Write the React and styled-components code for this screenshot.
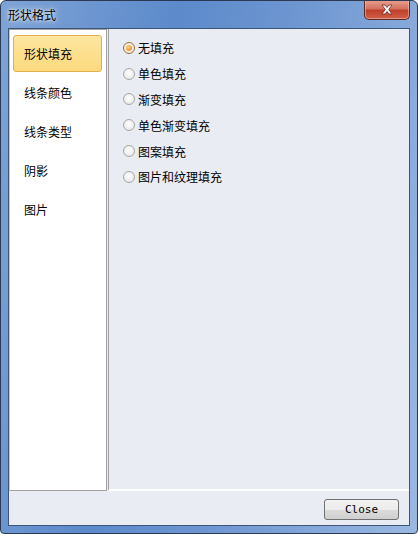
import React, { useState } from 'react'
import styled, { createGlobalStyle } from 'styled-components'

const GlobalStyle = createGlobalStyle`
  html, body {
    margin: 0;
    padding: 0;
    background: #ffffff;
  }
  body {
    font-family: "Noto Sans CJK SC", "Noto Sans", sans-serif;
  }
`

const Window = styled.div`
  width: 418px;
  height: 534px;
  box-sizing: border-box;
  border: 1px solid #2b3a52;
  border-radius: 6px 6px 4px 4px;
  background: linear-gradient(100deg, #7fa3d6 0%, #5c8acb 35%, #6f97d1 60%, #9ab8e2 100%);
  display: flex;
  flex-direction: column;
  overflow: hidden;
`

const TitleBar = styled.div`
  height: 27px;
  display: flex;
  align-items: flex-start;
  justify-content: space-between;
  padding-left: 7px;
`

const Title = styled.div`
  font-size: 12px;
  line-height: 28px;
  color: #000;
  text-shadow: 0 0 6px rgba(255, 255, 255, 0.9), 0 0 3px rgba(255, 255, 255, 0.9);
`

const CloseButton = styled.button`
  width: 46px;
  height: 20px;
  margin-right: 7px;
  margin-top: -1px;
  border: 1px solid #5b2a24;
  border-top: none;
  border-radius: 0 0 5px 5px;
  background: linear-gradient(#e8a293 0%, #d4725f 45%, #c0402b 55%, #d0604a 100%);
  box-shadow: inset 0 0 0 1px rgba(255, 200, 190, 0.5);
  display: flex;
  align-items: center;
  justify-content: center;
  padding: 0;
`

const Client = styled.div`
  flex: 1;
  margin: 0 7px 7px 7px;
  border: 1px solid #3d5678;
  background: #e9ecf2;
  display: flex;
  flex-direction: column;
`

const Body = styled.div`
  flex: 1;
  display: flex;
`

const Sidebar = styled.div`
  width: 98px;
  flex-shrink: 0;
  box-sizing: border-box;
  background: #ffffff;
  border: 1px solid #a0a0a0;
  border-left-color: #c8c8c8;
  box-shadow: inset 1px 1px 0 #ffffff;
  padding: 5px 4px 0 3px;
  display: flex;
  flex-direction: column;
`

const NavItem = styled.div`
  height: 37px;
  margin-bottom: 2px;
  box-sizing: border-box;
  border-radius: 3px;
  border: 1px solid ${(p) => (p.active ? '#e0b04e' : 'transparent')};
  background: ${(p) => (p.active ? 'linear-gradient(#fde6a0, #fcd97d)' : 'transparent')};
  padding-left: 10px;
  display: flex;
  align-items: center;
  font-size: 12px;
  color: #000;
`

const Content = styled.div`
  flex: 1;
  margin-left: 1px;
  border-left: 1px solid #a0a0a0;
  border-bottom: 2px solid #ffffff;
  padding: 6px 0 0 14px;
  display: flex;
  flex-direction: column;
`

const RadioRow = styled.label`
  height: 25.8px;
  display: flex;
  align-items: center;
  font-size: 12px;
  color: #000;
`

const RadioCircle = styled.span`
  width: 12px;
  height: 12px;
  box-sizing: border-box;
  border-radius: 50%;
  border: 1px solid ${(p) => (p.checked ? '#a26b35' : '#a8a8a8')};
  background: radial-gradient(circle at 50% 40%, #ffffff, #e2e2e2);
  margin-right: 3px;
  display: flex;
  align-items: center;
  justify-content: center;
  &::after {
    content: '';
    width: 6px;
    height: 6px;
    border-radius: 50%;
    background: ${(p) => (p.checked ? 'radial-gradient(circle at 40% 35%, #ffd27a, #e97a10)' : 'transparent')};
  }
`

const Footer = styled.div`
  height: 34px;
  display: flex;
  align-items: center;
  justify-content: flex-end;
  padding-right: 10px;
`

const Button = styled.button`
  width: 75px;
  height: 21px;
  border: 1px solid #707070;
  border-radius: 3px;
  background: linear-gradient(#f2f2f2 0%, #ebebeb 50%, #dddddd 51%, #cfcfcf 100%);
  font-family: "DejaVu Sans Mono", "Liberation Mono", monospace;
  font-size: 11px;
  color: #000;
  padding: 0;
  margin-top: 2px;
`

const navItems = ['形状填充', '线条颜色', '线条类型', '阴影', '图片']
const fillOptions = ['无填充', '单色填充', '渐变填充', '单色渐变填充', '图案填充', '图片和纹理填充']

const App = () => {
  const [selectedNav, setSelectedNav] = useState(0)
  const [selectedFill, setSelectedFill] = useState(0)
  return (
    <>
      <GlobalStyle />
      <Window>
        <TitleBar>
          <Title>形状格式</Title>
          <CloseButton>
            <svg width="14" height="11" viewBox="0 0 14 11">
              <path
                d="M2 1 L5 1 L7 3.5 L9 1 L12 1 L8.7 5.5 L12 10 L9 10 L7 7.5 L5 10 L2 10 L5.3 5.5 Z"
                fill="#ffffff"
                stroke="#6b2a22"
                strokeWidth="0.8"
              />
            </svg>
          </CloseButton>
        </TitleBar>
        <Client>
          <Body>
            <Sidebar>
              {navItems.map((item, index) => (
                <NavItem key={item} active={index === selectedNav} onClick={() => setSelectedNav(index)}>
                  {item}
                </NavItem>
              ))}
            </Sidebar>
            <Content>
              {fillOptions.map((option, index) => (
                <RadioRow key={option} onClick={() => setSelectedFill(index)}>
                  <RadioCircle checked={index === selectedFill} />
                  {option}
                </RadioRow>
              ))}
            </Content>
          </Body>
          <Footer>
            <Button>Close</Button>
          </Footer>
        </Client>
      </Window>
    </>
  )
}

export default App
